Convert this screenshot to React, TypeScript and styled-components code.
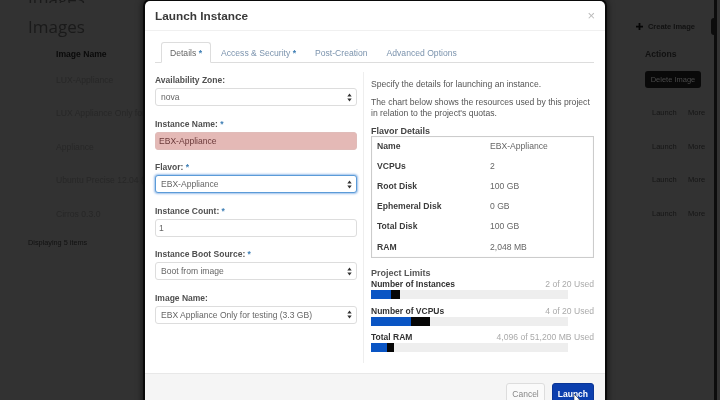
import React from "react";
import styled, { createGlobalStyle } from "styled-components";

const Global = createGlobalStyle`
  html, body { margin: 0; padding: 0; width: 720px; height: 400px; overflow: hidden; background: #323232; }
  body { font-family: "Liberation Sans", Arial, sans-serif; }
  #root { width: 720px; height: 400px; overflow: hidden; }
`;

const Screen = styled.div`
  position: relative;
  width: 720px;
  height: 400px;
  overflow: hidden;
  background: #323232;
  filter: blur(0.45px);
`;

/* Dimmed page behind the dialog */
const Page = styled.div`
  display: flex;
  flex-direction: column;
  width: 717px;
  height: 400px;
  box-sizing: border-box;
  padding: 0 16px 0 28px;
  border-right: 3px solid #0c0c0c;
  color: #1c1c1c;
  filter: blur(0.5px);
`;
const Cut = styled.div`
  font-size: 17px;
  line-height: 8px;
  height: 8px;
  margin-top: -5px;
  color: #1a1a1a;
  overflow: hidden;
  font-family: "Open Sans", sans-serif;
`;
const PageHead = styled.div`
  display: flex;
  justify-content: space-between;
  align-items: center;
  height: 26px;
  margin-top: 10px;
`;
const PageTitle = styled.div`
  font-size: 17px;
  color: #1a1a1a;
  font-family: "Open Sans", sans-serif;
`;
const CreateLink = styled.div`
  display: flex;
  align-items: center;
  gap: 5px;
  font-size: 7.5px;
  color: #111;
  font-weight: 700;
  margin-right: 3px;
`;
const BlackTab = styled.div`
  position: absolute;
  left: 711px;
  top: 18px;
  width: 6px;
  height: 17px;
  background: #0c0c0c;
  border-radius: 3px 0 0 3px;
`;
const Table = styled.div`
  display: flex;
  flex-direction: column;
  margin: 6px 0 0 28px;
`;
const Row = styled.div<{ $h: number }>`
  display: grid;
  grid-template-columns: 589px 39px 30px;
  align-items: center;
  height: ${(p) => p.$h}px;
  font-size: 8.6px;
  color: #272727;
`;
const HeadCell = styled.div`
  font-size: 8.6px;
  font-weight: 700;
  color: #0a0a0a;
`;
const ActionHead = styled.div`
  grid-column: 2 / 4;
  font-size: 8.6px;
  font-weight: 700;
  color: #111;
`;
const DeleteButton = styled.div`
  grid-column: 2 / 4;
  width: 56px;
  height: 17px;
  background: #090909;
  border-radius: 3px;
  color: #4a4a4a;
  font-size: 7.5px;
  line-height: 17px;
  text-align: center;
`;
const LaunchCell = styled.div`
  grid-column: 2;
  margin: -1px 0 0 7px;
  font-size: 7.5px;
  color: #151515;
`;
const MoreCell = styled.div`
  grid-column: 3;
  margin: -1px 0 0 4px;
  font-size: 7.5px;
  color: #151515;
`;
const Displaying = styled.div`
  margin-top: 7px;
  font-size: 7.3px;
  color: #111;
`;

/* Dialog */
const Modal = styled.div`
  position: absolute;
  left: 145px;
  top: 1px;
  width: 460px;
  height: 420px;
  display: flex;
  flex-direction: column;
  background: #fff;
  border-radius: 5px;
  box-shadow: 0 0 0 2px #0a0a0a, 0 0 6px 3px rgba(0, 0, 0, 0.5);
  color: #555;
  font-size: 8.6px;
`;
const ModalHeader = styled.div`
  display: flex;
  justify-content: space-between;
  align-items: center;
  height: 29px;
  padding: 0 10px;
  border-bottom: 1px solid #f0f0f0;
`;
const ModalTitle = styled.div`
  font-size: 11.8px;
  font-weight: 700;
  color: #3a3a3a;
`;
const Close = styled.div`
  font-size: 13px;
  color: #bbb;
  line-height: 1;
`;
const Tabs = styled.div`
  display: flex;
  align-items: flex-end;
  height: 31px;
  margin: 0 11px 0 10px;
  padding-left: 6px;
  border-bottom: 1px solid #ddd;
`;
const Tab = styled.div<{ $active?: boolean }>`
  height: 21px;
  line-height: 20px;
  padding: 0 8px;
  margin: 0 1px -1px 0;
  box-sizing: border-box;
  font-size: 8.6px;
  white-space: nowrap;
  color: ${(p) => (p.$active ? "#666" : "#7b93ad")};
  background: ${(p) => (p.$active ? "#fff" : "transparent")};
  border: 1px solid ${(p) => (p.$active ? "#ddd" : "transparent")};
  border-bottom-color: ${(p) => (p.$active ? "#fff" : "transparent")};
  border-radius: 3px 3px 0 0;
`;
const Star = styled.span`
  color: #3f7fb5;
  font-weight: 700;
`;
const Body = styled.div`
  display: grid;
  grid-template-columns: 202px minmax(0, 1fr);
  column-gap: 6px;
  padding: 9px 11px 0 10px;
  height: 310px;
  box-sizing: border-box;
`;
const LeftCol = styled.div`
  display: flex;
  flex-direction: column;
`;
const Field = styled.div`
  display: flex;
  flex-direction: column;
  height: 43.6px;
`;
const Label = styled.div`
  height: 16px;
  line-height: 16px;
  font-size: 8.5px;
  font-weight: 700;
  color: #505050;
`;
const Control = styled.div<{ $state?: "error" | "focus"; $input?: boolean }>`
  display: flex;
  justify-content: space-between;
  align-items: center;
  height: 18px;
  box-sizing: border-box;
  padding: 0 4px 0 ${(p) => (p.$input ? 3 : 5)}px;
  font-size: 8.55px;
  border-radius: 3px;
  color: ${(p) => (p.$state === "error" ? "#6b3a3a" : "#666")};
  background: ${(p) => (p.$state === "error" ? "#e4b9b6" : "#fff")};
  border: 1px solid
    ${(p) => (p.$state === "error" ? "#e0bcb9" : p.$state === "focus" ? "#5b9bd8" : "#ddd")};
  box-shadow: ${(p) => (p.$state === "focus" ? "0 0 2px 1px rgba(90,150,220,.6)" : "none")};
`;
const RightCol = styled.div`
  border-left: 1px solid #eee;
  padding: 7px 0 0 7px;
  margin-bottom: 10px;
  color: #555;
  font-size: 8.6px;
  line-height: 11px;
`;
const Para = styled.p`
  margin: 0 0 6px;
  font-size: 8.6px;
  line-height: 11.5px;
  color: #555;
  white-space: nowrap;
`;
const SubHead = styled.div`
  font-size: 9px;
  font-weight: 700;
  color: #444;
  line-height: 10px;
`;
const FlavorBox = styled.div`
  height: 122px;
  box-sizing: border-box;
  padding: 0 5px;
  border: 1px solid #ccc;
  box-shadow: inset 0 0 1px #ddd;
`;
const FlavorRow = styled.div`
  display: grid;
  grid-template-columns: 113px 1fr;
  align-items: center;
  height: 20.1px;
  color: #666;
`;
const FlavorKey = styled.div`
  font-weight: 700;
  color: #3c3c3c;
`;
const LimitsTitle = styled(SubHead)`
  margin-top: 10px;
  line-height: 11px;
  color: #555;
`;
const Limit = styled.div`
  margin-top: 0.5px;
  height: 26.2px;
`;
const LimitHead = styled.div`
  display: flex;
  justify-content: space-between;
  height: 11px;
  line-height: 11px;
`;
const LimitName = styled.div`
  font-weight: 700;
  font-size: 8.5px;
  color: #333;
`;
const LimitUsed = styled.div`
  color: #aaa;
`;
const Bar = styled.div`
  display: flex;
  width: 197px;
  height: 9px;
  background: #eee;
`;
const BarFill = styled.div<{ $w: number; $c: string }>`
  width: ${(p) => p.$w}px;
  background: ${(p) => p.$c};
`;
const Footer = styled.div`
  flex: 1;
  display: flex;
  justify-content: flex-end;
  gap: 7px;
  padding: 9px 11px 0 0;
  background: #f5f5f5;
  border-top: 1px solid #e8e8e8;
`;
const Btn = styled.div<{ $primary?: boolean }>`
  height: 22px;
  line-height: 20px;
  box-sizing: border-box;
  padding: 0 5px;
  border-radius: 3px;
  font-size: 8.5px;
  font-weight: ${(p) => (p.$primary ? 700 : 400)};
  color: ${(p) => (p.$primary ? "#fff" : "#888")};
  background: ${(p) => (p.$primary ? "#0c3fae" : "#fafafa")};
  border: 1px solid ${(p) => (p.$primary ? "#0a3596" : "#ddd")};
`;
const Cursor = styled.svg`
  position: absolute;
  left: 573px;
  top: 394px;
`;

const Updown = () => (
  <svg width="5" height="9" viewBox="0 0 5 9">
    <path d="M2.5 0.5 L4.7 3.4 H0.3 Z M2.5 8.5 L4.7 5.6 H0.3 Z" fill="#333" />
  </svg>
);

const rows = [
  "LUX-Appliance",
  "LUX Appliance Only for testing",
  "Appliance",
  "Ubuntu Precise 12.04 (x86_64)",
  "Cirros 0.3.0",
];

const flavor = [
  ["Name", "EBX-Appliance"],
  ["VCPUs", "2"],
  ["Root Disk", "100 GB"],
  ["Ephemeral Disk", "0 GB"],
  ["Total Disk", "100 GB"],
  ["RAM", "2,048 MB"],
];

const limits = [
  { name: "Number of Instances", used: "2 of 20 Used", blue: 20, black: 9 },
  { name: "Number of VCPUs", used: "4 of 20 Used", blue: 40, black: 19 },
  { name: "Total RAM", used: "4,096 of 51,200 MB Used", blue: 16, black: 7 },
];

export default function App() {
  return (
    <Screen>
      <Global />
      <Page>
        <Cut>Images</Cut>
        <PageHead>
          <PageTitle>Images</PageTitle>
          <CreateLink>
            <svg width="7" height="7" viewBox="0 0 8 8">
              <path d="M3 0h2v3h3v2H5v3H3V5H0V3h3z" fill="#050505" />
            </svg>
            Create Image
          </CreateLink>
        </PageHead>
        <BlackTab />
        <Table>
          <Row $h={18}>
            <HeadCell>Image Name</HeadCell>
            <ActionHead>Actions</ActionHead>
          </Row>
          {rows.map((name, i) => (
            <Row key={name} $h={33.5}>
              <div>{name}</div>
              {i === 0 ? (
                <DeleteButton>Delete Image</DeleteButton>
              ) : (
                <>
                  <LaunchCell>Launch</LaunchCell>
                  <MoreCell>More</MoreCell>
                </>
              )}
            </Row>
          ))}
        </Table>
        <Displaying>Displaying 5 items</Displaying>
      </Page>
      <Modal>
        <ModalHeader>
          <ModalTitle>Launch Instance</ModalTitle>
          <Close>×</Close>
        </ModalHeader>
        <Tabs>
          <Tab $active>
            Details <Star>*</Star>
          </Tab>
          <Tab>
            Access &amp; Security <Star>*</Star>
          </Tab>
          <Tab>Post-Creation</Tab>
          <Tab>Advanced Options</Tab>
        </Tabs>
        <Body>
          <LeftCol>
            <Field>
              <Label>Availability Zone:</Label>
              <Control>
                nova <Updown />
              </Control>
            </Field>
            <Field>
              <Label>
                Instance Name: <Star>*</Star>
              </Label>
              <Control $state="error" $input>EBX-Appliance</Control>
            </Field>
            <Field>
              <Label>
                Flavor: <Star>*</Star>
              </Label>
              <Control $state="focus">
                EBX-Appliance <Updown />
              </Control>
            </Field>
            <Field>
              <Label>
                Instance Count: <Star>*</Star>
              </Label>
              <Control $input>1</Control>
            </Field>
            <Field>
              <Label>
                Instance Boot Source: <Star>*</Star>
              </Label>
              <Control>
                Boot from image <Updown />
              </Control>
            </Field>
            <Field>
              <Label>Image Name:</Label>
              <Control>
                EBX Appliance Only for testing (3.3 GB) <Updown />
              </Control>
            </Field>
          </LeftCol>
          <RightCol>
            <Para>Specify the details for launching an instance.</Para>
            <Para>
              The chart below shows the resources used by this project
              <br />
              in relation to the project's quotas.
            </Para>
            <SubHead>Flavor Details</SubHead>
            <FlavorBox>
              {flavor.map(([k, v]) => (
                <FlavorRow key={k}>
                  <FlavorKey>{k}</FlavorKey>
                  <div>{v}</div>
                </FlavorRow>
              ))}
            </FlavorBox>
            <LimitsTitle>Project Limits</LimitsTitle>
            {limits.map((l) => (
              <Limit key={l.name}>
                <LimitHead>
                  <LimitName>{l.name}</LimitName>
                  <LimitUsed>{l.used}</LimitUsed>
                </LimitHead>
                <Bar>
                  <BarFill $w={l.blue} $c="#0a55c4" />
                  <BarFill $w={l.black} $c="#060606" />
                </Bar>
              </Limit>
            ))}
          </RightCol>
        </Body>
        <Footer>
          <Btn>Cancel</Btn>
          <Btn $primary>Launch</Btn>
        </Footer>
      </Modal>
      <Cursor width="9" height="11" viewBox="0 0 9 11">
        <path d="M1 0 L1 8 L3 6.5 L4.5 9.5 L6 9 L4.6 6 L7 6 Z" fill="#fff" stroke="#222" strokeWidth="0.5" />
      </Cursor>
    </Screen>
  );
}
